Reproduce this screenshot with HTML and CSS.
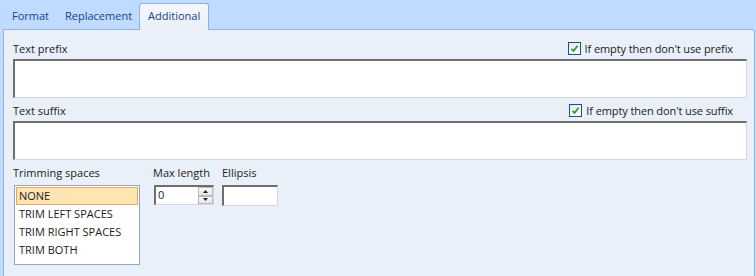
FILE: index.html
```html
<!DOCTYPE html>
<html lang="en">
<head>
  <meta charset="UTF-8" />
  <title>Additional</title>
  <link rel="stylesheet" href="styles.css">
</head>
<body>
  <div class="tabs">
    <div class="tab">Format</div>
    <div class="tab">Replacement</div>
    <div class="tab active">Additional</div>
  </div>

  <div class="panel">
    <!-- Prefix -->
    <div class="field-head">
      <span class="label">Text prefix</span>
      <label class="check">
        <span class="box"><svg viewBox="0 0 9 9"><path d="M1.5 4.8 L3.6 6.8 L7.6 1.8" fill="none" stroke="#2aa32a" stroke-width="1.8"/></svg></span>
        If empty then don't use prefix
      </label>
    </div>
    <div class="textbox"></div>

    <!-- Suffix -->
    <div class="field-head">
      <span class="label">Text suffix</span>
      <label class="check">
        <span class="box"><svg viewBox="0 0 9 9"><path d="M1.5 4.8 L3.6 6.8 L7.6 1.8" fill="none" stroke="#2aa32a" stroke-width="1.8"/></svg></span>
        If empty then don't use suffix
      </label>
    </div>
    <div class="textbox"></div>

    <div class="bottom-row">
      <div class="group trim">
        <span class="label">Trimming spaces</span>
        <ul class="listbox">
          <li class="selected">NONE</li>
          <li>TRIM LEFT SPACES</li>
          <li>TRIM RIGHT SPACES</li>
          <li>TRIM BOTH</li>
        </ul>
      </div>
      <div class="group max">
        <span class="label">Max length</span>
        <div class="spinner">
          <span class="value">0</span>
          <span class="arrows">
            <span class="arrow"><svg viewBox="0 0 5 3"><path d="M0 3 L2.5 0 L5 3z" fill="#222"/></svg></span>
            <span class="arrow"><svg viewBox="0 0 5 3"><path d="M0 0 L2.5 3 L5 0z" fill="#222"/></svg></span>
          </span>
        </div>
      </div>
      <div class="group">
        <span class="label">Ellipsis</span>
        <div class="small-box"></div>
      </div>
    </div>
  </div>
</body>
</html>
```

FILE: styles.css
```css
* { box-sizing: border-box; }
body {
  margin: 0;
  width: 756px;
  height: 276px;
  overflow: hidden;
  background: #bfdbff;
  font-family: 'Open Sans', sans-serif;
  font-size: 11px;
  color: #1b1b1b;
}

.tabs {
  display: flex;
  align-items: flex-end;
  height: 29px;
  padding-left: 4px;
}
.tab {
  color: #15428b;
  padding: 0 8px 5px 8px;
  line-height: 16px;
}
.tab.active {
  height: 27px;
  margin-left: -1px;
  padding: 4px 8px 0 8px;
  border: 1px solid #8db2e3;
  border-bottom: none;
  border-radius: 3px 3px 0 0;
  background: linear-gradient(#f5f8fc, #e9f0f9);
  position: relative;
  top: 1px;
}

.panel {
  margin-left: 3px;
  width: 752px;
  height: 252px;
  background: #e9f0f9;
  border: 1px solid #8db2e3;
  border-radius: 0 3px 0 0;
  padding: 10px 7px 0 9px;
}

.field-head {
  display: flex;
  justify-content: space-between;
  align-items: center;
  height: 16px;
  padding-right: 14px;
}
.check {
  display: flex;
  align-items: center;
  gap: 4px;
  letter-spacing: -0.1px;
}
.box {
  width: 13px;
  height: 13px;
  border: 1px solid #1c4f8c;
  background: linear-gradient(135deg, #e8e8e8, #ffffff);
  padding: 1px;
  display: flex;
}
.box svg { width: 9px; height: 9px; }

.textbox {
  margin-top: 3px;
  margin-bottom: 4px;
  height: 39px;
  background: #fff;
  border-top: 2px solid #6e6e6e;
  border-left: 2px solid #6e6e6e;
  border-right: 1px solid #d8d8d8;
  border-bottom: 1px solid #d8d8d8;
}

.bottom-row {
  display: flex;
}
.group {
  display: flex;
  flex-direction: column;
}
.group.trim { margin-right: 13px; }
.group.max { margin-right: 8px; }
.group .label {
  height: 18px;
  line-height: 18px;
}

.listbox {
  list-style: none;
  margin: 3px 0 0 1px;
  padding: 1px;
  width: 126px;
  height: 80px;
  background: #fff;
  border: 1px solid #8fa6c4;
}
.listbox li {
  height: 18px;
  line-height: 16px;
  padding-left: 2px;
  border: 1px solid transparent;
}
.listbox li.selected {
  background: #ffe5b2;
  border-color: #e8a85a;
}

.spinner {
  margin-top: 3px;
  margin-left: 1px;
  width: 60px;
  height: 20px;
  display: flex;
  background: #fff;
  border-top: 2px solid #6e6e6e;
  border-left: 2px solid #6e6e6e;
  border-right: 1px solid #d8d8d8;
  border-bottom: 1px solid #d8d8d8;
}
.spinner .value {
  flex: 1;
  padding-left: 2px;
  line-height: 16px;
}
.arrows {
  width: 15px;
  display: flex;
  flex-direction: column;
}
.arrow {
  flex: 1;
  display: flex;
  align-items: center;
  justify-content: center;
  background: linear-gradient(#fbfbfb, #e6e6e6);
  border: 1px solid #b9b9b9;
}
.arrow svg { width: 5px; height: 3px; }

.small-box {
  margin-top: 3px;
  width: 56px;
  height: 21px;
  background: #fff;
  border-top: 2px solid #6e6e6e;
  border-left: 2px solid #6e6e6e;
  border-right: 1px solid #d8d8d8;
  border-bottom: 1px solid #d8d8d8;
}
```
